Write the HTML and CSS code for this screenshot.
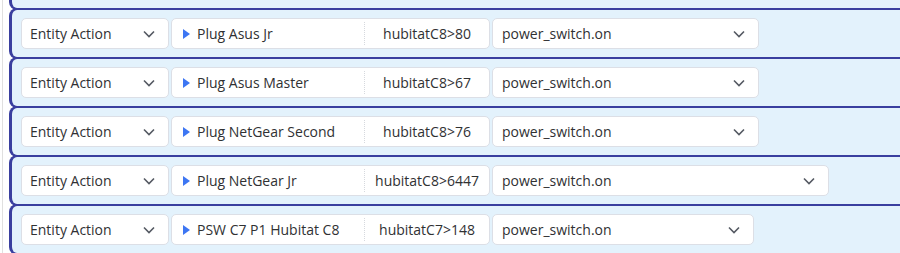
FILE: index.html
```html
<!DOCTYPE html>
<html>
<head>
<meta charset="utf-8">
<link rel="stylesheet" href="styles.css">
</head>
<body>
<div class="panel">
  <div class="list">
    <div class="row partial"></div>
    <div class="row">
      <div class="sel type"><span>Entity Action</span><svg class="chev" viewBox="0 0 12 8"><polyline points="1,1.5 6,6.5 11,1.5"/></svg></div>
      <div class="dev"><div class="name"><span class="tri"></span>Plug Asus Jr</div><div class="id">hubitatC8&gt;80</div></div>
      <div class="sel act" style="width:267px"><span>power_switch.on</span><svg class="chev" viewBox="0 0 12 8"><polyline points="1,1.5 6,6.5 11,1.5"/></svg></div>
    </div>
    <div class="row">
      <div class="sel type"><span>Entity Action</span><svg class="chev" viewBox="0 0 12 8"><polyline points="1,1.5 6,6.5 11,1.5"/></svg></div>
      <div class="dev"><div class="name"><span class="tri"></span>Plug Asus Master</div><div class="id">hubitatC8&gt;67</div></div>
      <div class="sel act" style="width:267px"><span>power_switch.on</span><svg class="chev" viewBox="0 0 12 8"><polyline points="1,1.5 6,6.5 11,1.5"/></svg></div>
    </div>
    <div class="row">
      <div class="sel type"><span>Entity Action</span><svg class="chev" viewBox="0 0 12 8"><polyline points="1,1.5 6,6.5 11,1.5"/></svg></div>
      <div class="dev"><div class="name"><span class="tri"></span>Plug NetGear Second</div><div class="id">hubitatC8&gt;76</div></div>
      <div class="sel act" style="width:267px"><span>power_switch.on</span><svg class="chev" viewBox="0 0 12 8"><polyline points="1,1.5 6,6.5 11,1.5"/></svg></div>
    </div>
    <div class="row">
      <div class="sel type"><span>Entity Action</span><svg class="chev" viewBox="0 0 12 8"><polyline points="1,1.5 6,6.5 11,1.5"/></svg></div>
      <div class="dev"><div class="name"><span class="tri"></span>Plug NetGear Jr</div><div class="id">hubitatC8&gt;6447</div></div>
      <div class="sel act" style="width:337px"><span>power_switch.on</span><svg class="chev" viewBox="0 0 12 8"><polyline points="1,1.5 6,6.5 11,1.5"/></svg></div>
    </div>
    <div class="row">
      <div class="sel type"><span>Entity Action</span><svg class="chev" viewBox="0 0 12 8"><polyline points="1,1.5 6,6.5 11,1.5"/></svg></div>
      <div class="dev"><div class="name"><span class="tri"></span>PSW C7 P1 Hubitat C8</div><div class="id">hubitatC7&gt;148</div></div>
      <div class="sel act" style="width:262px"><span>power_switch.on</span><svg class="chev" viewBox="0 0 12 8"><polyline points="1,1.5 6,6.5 11,1.5"/></svg></div>
    </div>
  </div>
</div>
</body>
</html>
```
FILE: styles.css
```css
html, body {
  margin: 0;
  padding: 0;
  background: #ffffff;
  overflow: hidden;
}
body {
  font-family: "Open Sans", "Noto Sans", sans-serif;
  font-size: 14px;
  color: #303133;
}
.panel {
  margin-left: 2px;
  border-left: 1px solid #e0e0e0;
  padding-left: 6px;
  height: 253px;
  overflow: hidden;
}
.list {
  margin-top: -41px;
  display: flex;
  flex-direction: column;
}
.row {
  display: flex;
  align-items: center;
  gap: 2px;
  height: 47px;
  padding: 0 9px;
  background: #e3f2fc;
  border-top: 2px solid #3a3f9f;
  border-bottom: 2px solid #3a3f9f;
  border-left: 3px solid #3a3f9f;
  border-radius: 8px 0 0 8px;
  margin-top: -2px;
  flex: none;
}
.row:first-child {
  margin-top: 0;
}
.sel, .dev {
  box-sizing: border-box;
  height: 31px;
  background: #ffffff;
  border: 1px solid #dcdfe6;
  border-radius: 5px;
  display: flex;
  align-items: center;
}
.sel {
  justify-content: space-between;
  padding: 0 13px 0 8px;
}
.type {
  width: 148px;
}
.act {
  padding-left: 9px;
}
.chev {
  width: 12px;
  height: 8px;
  fill: none;
  stroke: #555a63;
  stroke-width: 1.6;
}
.dev {
  width: 319px;
}
.name {
  width: 192px;
  box-sizing: border-box;
  padding-left: 11px;
  display: flex;
  align-items: center;
  white-space: nowrap;
}
.tri {
  width: 0;
  height: 0;
  border-top: 5px solid transparent;
  border-bottom: 5px solid transparent;
  border-left: 7px solid #3d76f3;
  margin-right: 7px;
}
.id {
  flex: 1;
  align-self: stretch;
  display: flex;
  align-items: center;
  justify-content: center;
  border-left: 1px dotted #d6d9de;
  margin: 3px 0;
}
```
